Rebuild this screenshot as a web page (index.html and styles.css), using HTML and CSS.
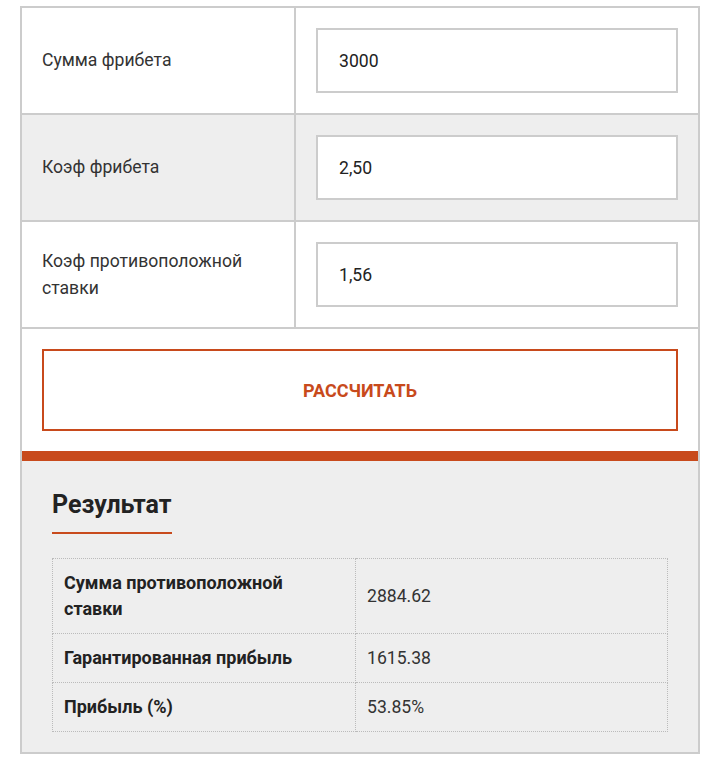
FILE: index.html
```html
<!DOCTYPE html>
<html lang="ru">
<head>
<meta charset="UTF-8">
<meta name="viewport" content="width=device-width, initial-scale=1.0">
<title>Калькулятор фрибета</title>
<link rel="stylesheet" href="styles.css">
</head>
<body>
<div class="calc">
<table class="calc-form">
<tr>
<td class="calc-label">Сумма фрибета</td>
<td class="calc-field"><input class="calc-input" type="text" value="3000"></td>
</tr>
<tr class="odd">
<td class="calc-label">Коэф фрибета</td>
<td class="calc-field"><input class="calc-input" type="text" value="2,50"></td>
</tr>
<tr>
<td class="calc-label">Коэф противоположной ставки</td>
<td class="calc-field"><input class="calc-input" type="text" value="1,56"></td>
</tr>
<tr>
<td class="calc-submit" colspan="2"><button class="calc-btn">Рассчитать</button></td>
</tr>
</table>

<div class="result">
<h2 class="result-title">Результат</h2>
<table class="result-table">
<tr>
<td class="result-label">Сумма противоположной ставки</td>
<td class="result-value">2884.62</td>
</tr>
<tr>
<td class="result-label">Гарантированная прибыль</td>
<td class="result-value">1615.38</td>
</tr>
<tr>
<td class="result-label">Прибыль (%)</td>
<td class="result-value">53.85%</td>
</tr>
</table>
</div>
</div>
</body>
</html>
```

FILE: styles.css
```css
body {
    margin: 0;
    background-color: #fff;
    font-family: Roboto, "Liberation Sans", sans-serif;
    color: #333;
}

.calc {
    width: 680px;
    margin: 6px auto 0;
    border: 2px solid #ccc;
    box-sizing: border-box;
}

.calc-form {
    width: 100%;
    border-collapse: collapse;
    border-bottom: 10px solid #c84a1c;
}

.calc-form td {
    padding: 20px;
    border-bottom: 2px solid #ccc;
}

.calc-form tr:last-child td {
    border-bottom: none;
}

.calc-form tr.odd td {
    background-color: #eee;
}

.calc-label {
    width: 232px;
    border-right: 2px solid #ccc;
    font-size: 1.1rem;
    line-height: 27px;
}

.calc-input {
    display: block;
    width: 100%;
    height: 65px;
    box-sizing: border-box;
    border: 2px solid #ccc;
    padding: 0 21px;
    font-family: inherit;
    font-size: 1.1rem;
    color: #222;
    background: #fff;
    outline: none;
}

.calc-btn {
    display: block;
    width: 100%;
    height: 82px;
    border: 2px solid #c84a1c;
    background: #fff;
    color: #c84a1c;
    font-family: inherit;
    font-size: 18px;
    font-weight: bold;
    text-transform: uppercase;
    cursor: pointer;
}

.result {
    background-color: #eee;
    padding: 28px 30px 20px;
}

.result-title {
    display: inline-block;
    margin: 0 0 24px;
    padding-bottom: 12px;
    border-bottom: 2px solid #c84a1c;
    font-size: 25px;
    line-height: 31px;
    font-weight: bold;
    color: #222;
}

.result-table {
    width: 100%;
    table-layout: fixed;
    border-collapse: collapse;
    border: 1px dotted #bbb;
}

.result-table td {
    padding: 11px;
    border: 1px dotted #bbb;
    font-size: 1.1rem;
    line-height: 26px;
    color: #333;
}

.result-table td.result-label {
    width: 280px;
    font-size: 18px;
    font-weight: bold;
    color: #222;
}
```
